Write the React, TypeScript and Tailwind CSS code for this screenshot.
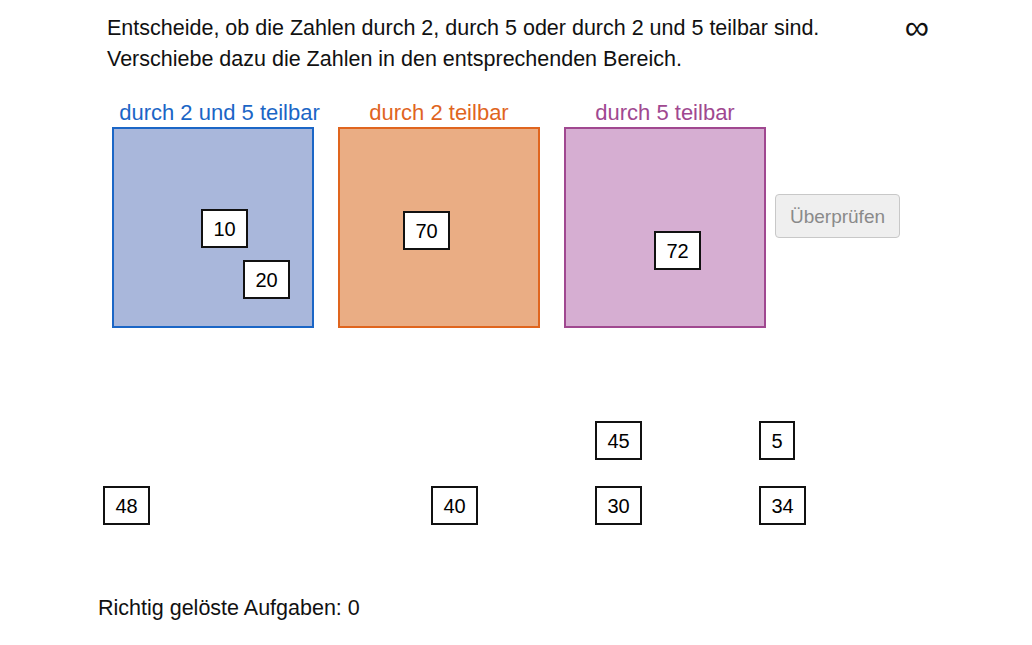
import React from "react";

type Tile = { v: string; x: number; y: number; w?: number };

const tiles: Tile[] = [
  { v: "10", x: 201, y: 209 },
  { v: "20", x: 243, y: 260 },
  { v: "70", x: 403, y: 211 },
  { v: "72", x: 654, y: 231 },
  { v: "45", x: 595, y: 421 },
  { v: "5", x: 759, y: 421, w: 36 },
  { v: "48", x: 103, y: 486 },
  { v: "40", x: 431, y: 486 },
  { v: "30", x: 595, y: 486 },
  { v: "34", x: 759, y: 486 },
];

const boxes = [
  {
    label: "durch 2 und 5 teilbar",
    text: "text-[#1b66c6] pl-[13px]",
    box: "bg-[#a9b7db] border-[#1b66c6]",
  },
  {
    label: "durch 2 teilbar",
    text: "text-[#e0651e]",
    box: "bg-[#eaad84] border-[#e0651e]",
  },
  {
    label: "durch 5 teilbar",
    text: "text-[#a04890]",
    box: "bg-[#d6aed2] border-[#a04890]",
  },
];

export default function App() {
  return (
    <div
      className="relative w-[1032px] h-[645px] bg-white text-black overflow-hidden"
      style={{ fontFamily: '"Liberation Sans", Arial, sans-serif' }}
    >
      <div className="flex pl-[107px] pr-[103px] pt-[13px]">
        <div className="flex-1 text-[21.5px] leading-[31px] text-[#111]">
          <div>Entscheide, ob die Zahlen durch 2, durch 5 oder durch 2 und 5 teilbar sind.</div>
          <div>Verschiebe dazu die Zahlen in den entsprechenden Bereich.</div>
        </div>
        <div className="text-[34px] leading-[31px] -mt-[1px] text-[#111]">∞</div>
      </div>

      <div className="flex gap-[24px] pl-[112px] mt-[26px]">
        {boxes.map((b) => (
          <div key={b.label} className="flex flex-col items-center w-[202px] shrink-0">
            <div className={`text-[22px] leading-[24px] h-[24px] mb-[2px] whitespace-nowrap shrink-0 ${b.text}`}>{b.label}</div>
            <div className={`w-[202px] h-[201px] border-2 ${b.box}`} />
          </div>
        ))}
        <div className="mt-[93px] -ml-[15px]">
          <button className="w-[125px] h-[44px] rounded-[4px] border border-[#c8c8c8] bg-[#efefef] text-[#8a8a8a] text-[19px] leading-none">
            Überprüfen
          </button>
        </div>
      </div>

      <div className="absolute left-[98px] top-[594px] text-[21.5px] leading-[28px] text-[#111]">
        Richtig gelöste Aufgaben: 0
      </div>

      {tiles.map((t) => (
        <div
          key={t.v}
          className="absolute flex items-center justify-center h-[39px] border-2 border-[#111] bg-white text-[20px] text-black"
          style={{ left: t.x, top: t.y, width: t.w ?? 47 }}
        >
          {t.v}
        </div>
      ))}
    </div>
  );
}
